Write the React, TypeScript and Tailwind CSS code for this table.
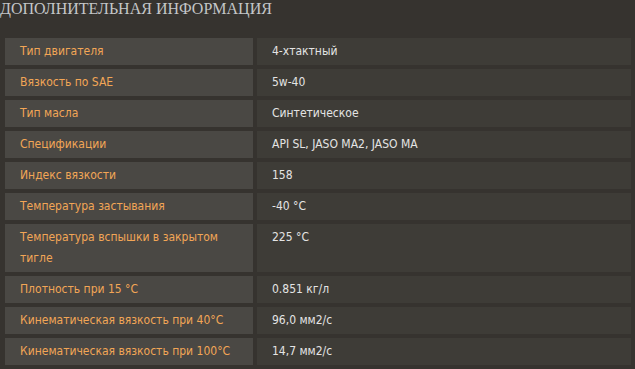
const rows: { label: string; value: string }[] = [
  { label: "Тип двигателя", value: "4-хтактный" },
  { label: "Вязкость по SAE", value: "5w-40" },
  { label: "Тип масла", value: "Синтетическое" },
  { label: "Спецификации", value: "API SL, JASO MA2, JASO MA" },
  { label: "Индекс вязкости", value: "158" },
  { label: "Температура застывания", value: "-40 °C" },
  { label: "Температура вспышки в закрытом тигле", value: "225 °C" },
  { label: "Плотность при 15 °C", value: "0.851 кг/л" },
  { label: "Кинематическая вязкость при 40°C", value: "96,0 мм2/с" },
  { label: "Кинематическая вязкость при 100°C", value: "14,7 мм2/с" },
];

export default function App() {
  return (
    <div className="w-[635px] h-[369px] overflow-hidden bg-[#36332f]">
      <h2 className="font-['Liberation_Serif',serif] text-[16px] leading-[18px] uppercase text-[#c4c6c8] mb-[16px]">
        Дополнительная информация
      </h2>
      <table className="ml-[1px] w-[634px] table-fixed border-separate border-spacing-[4px] font-['DejaVu_Sans_Condensed','DejaVu_Sans',sans-serif] text-[12px] leading-[21px]">
        <colgroup>
          <col className="w-[248px]" />
          <col />
        </colgroup>
        <tbody>
          {rows.map((r) => (
            <tr key={r.label}>
              <td className="align-top bg-[#4a4844] text-[#f2a656] pl-[15px] pr-[16px] py-[3px]">
                {r.label}
              </td>
              <td className="align-top bg-[#3e3c37] text-[#e4e4e4] pl-[15px] pr-[10px] py-[3px]">
                {r.value}
              </td>
            </tr>
          ))}
        </tbody>
      </table>
    </div>
  );
}
